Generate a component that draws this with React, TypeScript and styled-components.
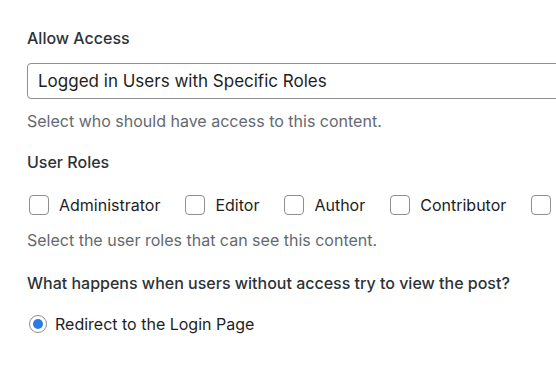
import React from "react";
import styled, { createGlobalStyle } from "styled-components";

const Global = createGlobalStyle`
  html, body { margin: 0; padding: 0; background: #ffffff; overflow: hidden; }
  body { font-family: Inter, "Noto Sans", sans-serif; -webkit-font-smoothing: antialiased; }
`;

const Panel = styled.div`
  width: 620px;
  padding: 27px 0 0 27px;
  display: flex;
  flex-direction: column;
`;

const Field = styled.div`
  display: flex;
  flex-direction: column;
`;

const Label = styled.div`
  font-size: 16px;
  font-weight: 500;
  color: #2c3338;
  line-height: 22px;
  margin-bottom: 14px;
`;

const SelectBox = styled.div`
  height: 36px;
  box-sizing: border-box;
  border: 1px solid #8c8f94;
  border-radius: 4px;
  display: flex;
  align-items: center;
  padding: 0 10px;
  font-size: 17px;
  color: #1e1e1e;
`;

const Help = styled.div<{ $mt: number; $mb: number }>`
  font-size: 16px;
  color: #646970;
  line-height: 20px;
  margin-top: ${(p) => p.$mt}px;
  margin-bottom: ${(p) => p.$mb}px;
`;

const Row = styled.div<{ $mt: number }>`
  display: flex;
  align-items: center;
  gap: 25px;
  padding-left: 2px;
  height: 24px;
  margin-top: ${(p) => p.$mt}px;
`;

const Option = styled.label<{ $gap: number }>`
  display: flex;
  align-items: center;
  gap: ${(p) => p.$gap}px;
  font-size: 16px;
  color: #1e1e1e;
  white-space: nowrap;
`;

const Box = styled.span`
  width: 18px;
  height: 18px;
  border: 1px solid #8c8f94;
  border-radius: 4px;
  background: #fff;
  flex: none;
`;

const Radio = styled.span`
  width: 16px;
  height: 16px;
  border: 1px solid #8c8f94;
  border-radius: 50%;
  display: flex;
  align-items: center;
  justify-content: center;
  flex: none;
  &::after {
    content: "";
    width: 10px;
    height: 10px;
    border-radius: 50%;
    background: #2c7be5;
  }
`;

const roles = ["Administrator", "Editor", "Author", "Contributor", "Subscriber"];

export default function App() {
  return (
    <>
      <Global />
      <Panel>
        <Field>
          <Label>Allow Access</Label>
          <SelectBox>Logged in Users with Specific Roles</SelectBox>
          <Help $mt={12} $mb={20}>Select who should have access to this content.</Help>
        </Field>
        <Field>
          <Label>User Roles</Label>
          <Row $mt={6}>
            {roles.map((r) => (
              <Option key={r} $gap={10}>
                <Box />
                {r}
              </Option>
            ))}
          </Row>
          <Help $mt={13} $mb={22}>Select the user roles that can see this content.</Help>
        </Field>
        <Field>
          <Label>What happens when users without access try to view the post?</Label>
          <Row $mt={4}>
            <Option $gap={8}>
              <Radio />
              Redirect to the Login Page
            </Option>
          </Row>
        </Field>
      </Panel>
    </>
  );
}
